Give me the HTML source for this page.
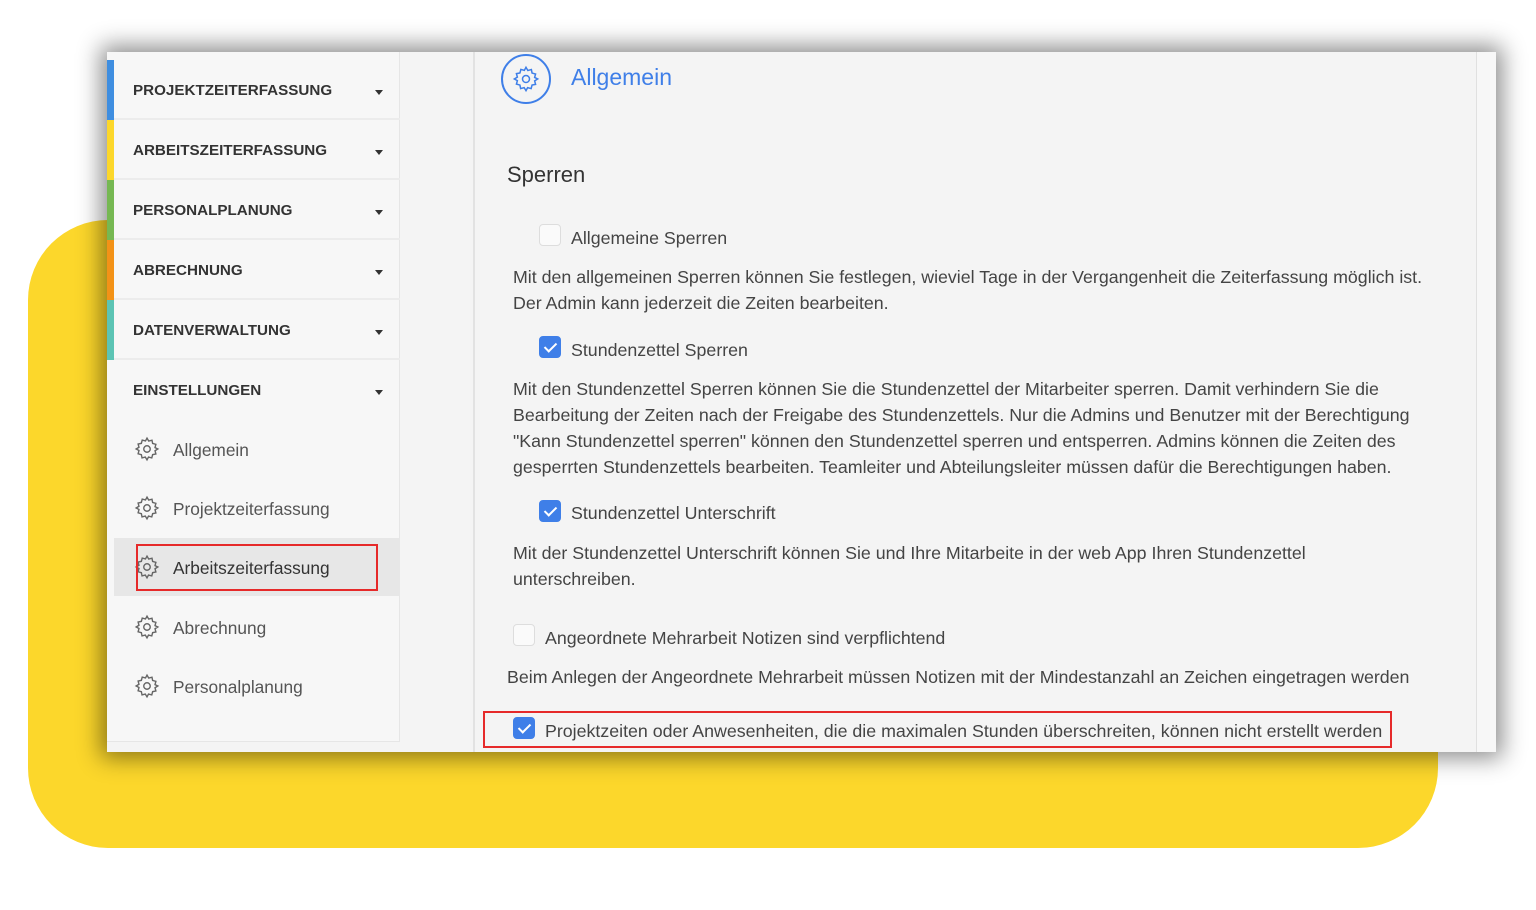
<!DOCTYPE html>
<html><head><meta charset="utf-8"><style>
*{margin:0;padding:0;box-sizing:border-box}
body{width:1536px;height:910px;background:#fff;position:relative;overflow:hidden;font-family:"Liberation Sans",sans-serif;color:#444}
.yellow{position:absolute;left:28px;top:220px;width:1410px;height:628px;background:#fcd72b;border-radius:80px}
.panel{position:absolute;left:107px;top:52px;width:1389px;height:700px;background:#f4f4f4;box-shadow:0 0 22px 6px rgba(0,0,0,.45);overflow:hidden}
.side{position:absolute;left:0;top:0;width:293px;height:690px;background:#f7f7f7;border-right:1px solid #e6e6e6;border-bottom:1px solid #e6e6e6}
.hd{position:absolute;left:0;width:293px;height:60px;border-bottom:2px solid #ececec;font-weight:bold;font-size:15.2px;color:#333;padding-left:26px;line-height:62px}
.hd .bar{position:absolute;left:0;top:0;width:7px;height:60px}
.hd .car{position:absolute;right:17px;top:30px;border-left:4px solid transparent;border-right:4px solid transparent;border-top:5px solid #333}
.it{position:absolute;left:7px;width:286px;height:58px;font-size:17.3px;color:#555;padding-left:59px;line-height:60px}
.it svg{position:absolute;left:20px;top:16px}
.vline{position:absolute;left:366px;top:0;width:2px;height:700px;background:#e2e2e2}
.sb{position:absolute;left:1369px;top:0;width:20px;height:700px;background:#f7f7f7;border-left:1px solid #e0e0e0}
.t{position:absolute;font-size:17.8px;color:#444;line-height:26px;white-space:nowrap}
.cb{position:absolute;width:22px;height:22px;border-radius:4px;border:1px solid #ddd;background:#fafafa}
.cb.on{background:#3f7fe8;border-color:#3f7fe8}
.cb.on::after{content:"";position:absolute;left:7px;top:3px;width:5px;height:10px;border:solid #fff;border-width:0 2.5px 2.5px 0;transform:rotate(45deg)}
</style></head><body>
<div class="yellow"></div>
<div class="panel">
 <div class="side">
  <div class="hd" style="top:8px"><div class="bar" style="background:#3f8ee0"></div>PROJEKTZEITERFASSUNG<div class="car"></div></div>
  <div class="hd" style="top:68px"><div class="bar" style="background:#fcd72b"></div>ARBEITSZEITERFASSUNG<div class="car"></div></div>
  <div class="hd" style="top:128px"><div class="bar" style="background:#76b852"></div>PERSONALPLANUNG<div class="car"></div></div>
  <div class="hd" style="top:188px"><div class="bar" style="background:#f39217"></div>ABRECHNUNG<div class="car"></div></div>
  <div class="hd" style="top:248px"><div class="bar" style="background:#5cc4b4"></div>DATENVERWALTUNG<div class="car"></div></div>
  <div class="hd" style="top:308px;border:none">EINSTELLUNGEN<div class="car"></div></div>
  <div class="it" style="top:368px"><svg width="26" height="26" viewBox="0 0 24 24" fill="none" stroke="#666" stroke-width="1.3"><circle cx="12" cy="12" r="3"/><path d="M12 2l1.6 2.7 3-.8.6 3 3 .8-.8 3L22 12l-2.6 1.6.8 3-3 .6-.8 3-3-.8L12 22l-1.6-2.6-3 .8-.6-3-3-.8.8-3L2 12l2.6-1.6-.8-3 3-.6.8-3 3 .8z"/></svg>Allgemein</div>
  <div class="it" style="top:427px"><svg width="26" height="26" viewBox="0 0 24 24" fill="none" stroke="#666" stroke-width="1.3"><circle cx="12" cy="12" r="3"/><path d="M12 2l1.6 2.7 3-.8.6 3 3 .8-.8 3L22 12l-2.6 1.6.8 3-3 .6-.8 3-3-.8L12 22l-1.6-2.6-3 .8-.6-3-3-.8.8-3L2 12l2.6-1.6-.8-3 3-.6.8-3 3 .8z"/></svg>Projektzeiterfassung</div>
  <div class="it" style="top:486px;background:#e7e7e7;color:#333"><svg width="26" height="26" viewBox="0 0 24 24" fill="none" stroke="#666" stroke-width="1.3"><circle cx="12" cy="12" r="3"/><path d="M12 2l1.6 2.7 3-.8.6 3 3 .8-.8 3L22 12l-2.6 1.6.8 3-3 .6-.8 3-3-.8L12 22l-1.6-2.6-3 .8-.6-3-3-.8.8-3L2 12l2.6-1.6-.8-3 3-.6.8-3 3 .8z"/></svg>Arbeitszeiterfassung
   <div style="position:absolute;left:22px;top:6px;width:242px;height:47px;border:2px solid #e62a2a"></div></div>
  <div class="it" style="top:546px"><svg width="26" height="26" viewBox="0 0 24 24" fill="none" stroke="#666" stroke-width="1.3"><circle cx="12" cy="12" r="3"/><path d="M12 2l1.6 2.7 3-.8.6 3 3 .8-.8 3L22 12l-2.6 1.6.8 3-3 .6-.8 3-3-.8L12 22l-1.6-2.6-3 .8-.6-3-3-.8.8-3L2 12l2.6-1.6-.8-3 3-.6.8-3 3 .8z"/></svg>Abrechnung</div>
  <div class="it" style="top:605px"><svg width="26" height="26" viewBox="0 0 24 24" fill="none" stroke="#666" stroke-width="1.3"><circle cx="12" cy="12" r="3"/><path d="M12 2l1.6 2.7 3-.8.6 3 3 .8-.8 3L22 12l-2.6 1.6.8 3-3 .6-.8 3-3-.8L12 22l-1.6-2.6-3 .8-.6-3-3-.8.8-3L2 12l2.6-1.6-.8-3 3-.6.8-3 3 .8z"/></svg>Personalplanung</div>
 </div>
 <div class="vline"></div>
 <div class="sb"></div>
 <div style="position:absolute;left:394px;top:2px;width:50px;height:50px;border:2px solid #3f7fe8;border-radius:50%"><svg style="position:absolute;left:9px;top:9px" width="28" height="28" viewBox="0 0 24 24" fill="none" stroke="#3f7fe8" stroke-width="1.3"><circle cx="12" cy="12" r="3"/><path d="M12 2l1.6 2.7 3-.8.6 3 3 .8-.8 3L22 12l-2.6 1.6.8 3-3 .6-.8 3-3-.8L12 22l-1.6-2.6-3 .8-.6-3-3-.8.8-3L2 12l2.6-1.6-.8-3 3-.6.8-3 3 .8z"/></svg></div>
 <div class="t" style="left:464px;top:10px;font-size:23px;color:#3f7fe8;line-height:30px">Allgemein</div>
 <div class="t" style="left:400px;top:108px;font-size:22px;color:#333;line-height:30px">Sperren</div>
 <div class="cb" style="left:432px;top:172px"></div>
 <div class="t" style="left:464px;top:173px">Allgemeine Sperren</div>
 <div class="t" style="left:406px;top:212px">Mit den allgemeinen Sperren können Sie festlegen, wieviel Tage in der Vergangenheit die Zeiterfassung möglich ist.<br>Der Admin kann jederzeit die Zeiten bearbeiten.</div>
 <div class="cb on" style="left:432px;top:284px"></div>
 <div class="t" style="left:464px;top:285px">Stundenzettel Sperren</div>
 <div class="t" style="left:406px;top:324px">Mit den Stundenzettel Sperren können Sie die Stundenzettel der Mitarbeiter sperren. Damit verhindern Sie die<br>Bearbeitung der Zeiten nach der Freigabe des Stundenzettels. Nur die Admins und Benutzer mit der Berechtigung<br>"Kann Stundenzettel sperren" können den Stundenzettel sperren und entsperren. Admins können die Zeiten des<br>gesperrten Stundenzettels bearbeiten. Teamleiter und Abteilungsleiter müssen dafür die Berechtigungen haben.</div>
 <div class="cb on" style="left:432px;top:448px"></div>
 <div class="t" style="left:464px;top:448px">Stundenzettel Unterschrift</div>
 <div class="t" style="left:406px;top:488px">Mit der Stundenzettel Unterschrift können Sie und Ihre Mitarbeite in der web App Ihren Stundenzettel<br>unterschreiben.</div>
 <div class="cb" style="left:406px;top:572px"></div>
 <div class="t" style="left:438px;top:573px">Angeordnete Mehrarbeit Notizen sind verpflichtend</div>
 <div class="t" style="left:400px;top:612px">Beim Anlegen der Angeordnete Mehrarbeit müssen Notizen mit der Mindestanzahl an Zeichen eingetragen werden</div>
 <div style="position:absolute;left:376px;top:659px;width:909px;height:37px;border:2px solid #e62a2a"></div>
 <div class="cb on" style="left:406px;top:665px"></div>
 <div class="t" style="left:438px;top:666px">Projektzeiten oder Anwesenheiten, die die maximalen Stunden überschreiten, können nicht erstellt werden</div>
</div>
</body></html>
